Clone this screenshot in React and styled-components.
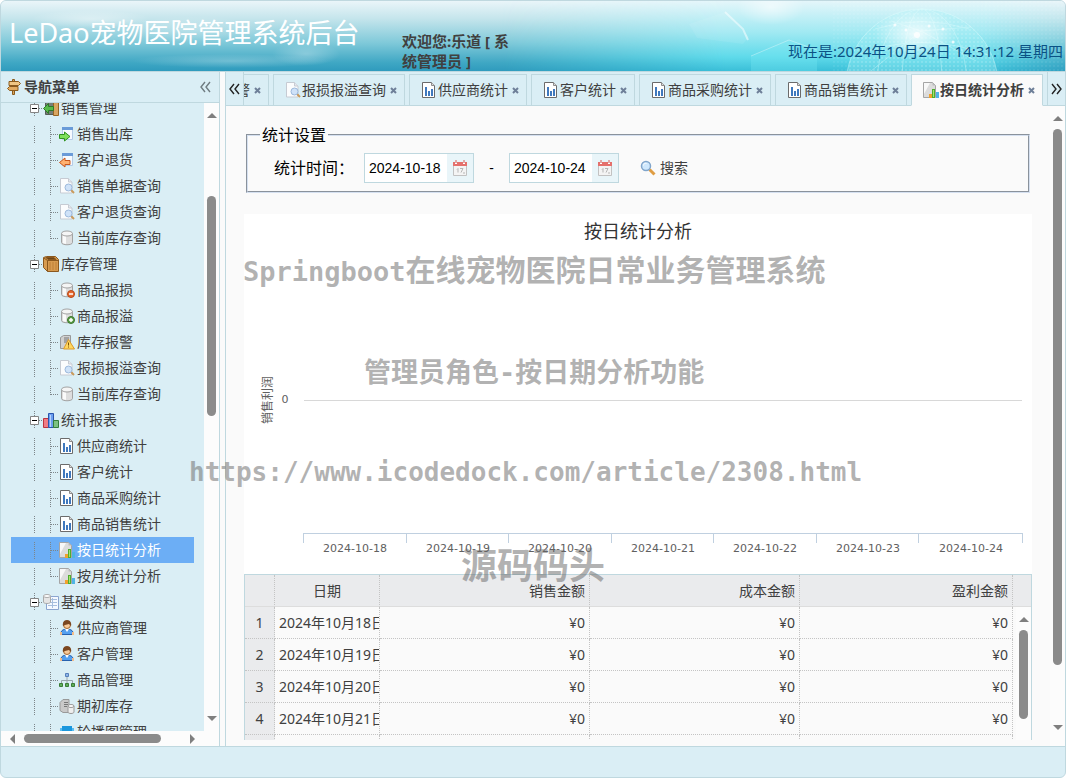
import React, { useEffect, useRef } from "react";
import styled, { createGlobalStyle } from "styled-components";

const GlobalStyle = createGlobalStyle`
  * {
    box-sizing: border-box;
  }

  body {
    margin: 0;
    background: #fff;
    color: #404040;
    font-family: "Noto Sans", "Noto Sans CJK SC", sans-serif;
    font-size: 14px;
    line-height: 20px;
  }

  button, input {
    font: inherit;
    color: inherit;
  }

  button {
    display: flex;
    align-items: center;
    justify-content: center;
    padding: 0;
    border: 0;
    background: none;
    cursor: pointer;
  }
`;

const Page = styled.div`
  position: relative;
  display: flex;
  flex-direction: column;
  height: 100vh;
  overflow: hidden;
  border: 1px solid #bfd8df;
  border-radius: 6px;
  background: #daeef5;
`;

const Header = styled.header`
  position: relative;
  flex: none;
  display: grid;
  grid-template-columns: 393px 116px 1fr;
  height: 70px;
  overflow: hidden;
  padding-left: 8px;
`;

const HeaderArt = styled.svg`
  position: absolute;
  inset: 0;
  width: 100%;
  height: 100%;
`;

const Title = styled.h1`
  position: relative;
  margin: 0;
  padding-top: 12px;
  color: #fff;
  font-size: 27px;
  font-weight: 400;
  line-height: 40px;
  white-space: nowrap;
`;

const Welcome = styled.div`
  position: relative;
  align-self: end;
  font-size: 15px;
  font-weight: bold;
`;

const Clock = styled.div`
  position: relative;
  align-self: end;
  padding: 0 2px 10px 0;
  color: #0b5285;
  font-size: 15px;
  text-align: right;
`;

const Body = styled.div`
  flex: 1;
  display: flex;
  min-height: 0;
  gap: 5px;
  background: #fafafa;
  border-top: 1px solid #bfd8df;
  border-bottom: 1px solid #bfd8df;
`;

const Footer = styled.footer`
  flex: none;
  height: 30px;
`;

const Sidebar = styled.aside`
  flex: none;
  display: flex;
  flex-direction: column;
  width: 219px;
  border-right: 1px solid #bfd8df;
  background: #fcfcfc;
`;

const SidebarHead = styled.div`
  flex: none;
  display: flex;
  align-items: center;
  gap: 2px;
  height: 31px;
  padding: 0 8px 0 5px;
  border-bottom: 1px solid #bfd8df;
  background: #daeef5;
`;

const SidebarTitle = styled.h2`
  flex: 1;
  margin: 0;
  font-size: 14px;
`;

const SidebarMain = styled.div`
  flex: 1;
  display: flex;
  min-height: 0;
`;

const TreePane = styled.nav`
  flex: 1;
  overflow: hidden;
  padding: 0 10px;
  background: #daeef5;
`;

const TreeList = styled.ul`
  margin: 0;
  padding: 0;
  list-style: none;
`;

const TreeLink = styled.a`
  display: flex;
  align-items: center;
  height: 26px;
  padding-left: 16px;
  color: ${(p) => (p.$active ? "#fff" : "#404040")};
  background: ${(p) => (p.$active ? "#6caef5" : "none")};
  text-decoration: none;
  white-space: nowrap;
`;

const TreeText = styled.span`
  padding-left: 2px;
`;

const Svg = styled.svg`
  flex: none;
  display: block;
`;

const ScrollBar = styled.div`
  flex: none;
  display: flex;
  flex-direction: ${(p) => (p.$row ? "row" : "column")};
  align-items: center;
  gap: ${(p) => (p.$row ? 0 : 2)}px;
  width: ${(p) => (p.$row ? "auto" : "15px")};
  height: ${(p) => (p.$row ? "15px" : "auto")};
  padding: ${(p) => p.$pad};
  background: #fcfcfc;
`;

const ScrollGap = styled.div`
  flex: ${(p) => p.$grow} 0 0;
`;

const ScrollThumb = styled.div`
  flex: ${(p) => p.$grow} 0 0;
  width: ${(p) => (p.$row ? "auto" : "9px")};
  height: ${(p) => (p.$row ? "9px" : "auto")};
  border-radius: 5px;
  background: #8b8b8b;
`;

const Main = styled.main`
  flex: 1;
  display: flex;
  flex-direction: column;
  min-width: 0;
  border-left: 1px solid #bfd8df;
`;

const TabBar = styled.div`
  flex: none;
  display: flex;
  height: 34px;
  background: #daeef5;
`;

const TabScroller = styled.button`
  flex: none;
  width: 18px;
  border: solid #bfd8df;
  border-width: ${(p) => (p.$right ? "0 0 1px 1px" : "0 1px 1px 0")};
`;

const TabStrip = styled.div`
  flex: 1;
  display: flex;
  justify-content: flex-end;
  align-items: flex-end;
  gap: 4px;
  min-width: 0;
  overflow: hidden;
  padding-right: 4px;
  box-shadow: inset 0 -1px #bfd8df;
`;

const Tab = styled.div`
  flex: none;
  display: flex;
  align-items: center;
  height: 32px;
  padding-left: 11px;
  border: 1px solid #bfd8df;
  border-bottom-color: ${(p) => (p.$active ? "#fafafa" : "#bfd8df")};
  background: ${(p) => (p.$active ? "#fafafa" : "#daeef5")};
  font-weight: ${(p) => (p.$active ? "bold" : "normal")};
`;

const TabLabel = styled.button`
  gap: 1px;
  font-weight: inherit;
  white-space: nowrap;
`;

const TabClose = styled.button`
  justify-content: flex-start;
  width: 18px;
  height: 16px;
  padding-left: 4px;
`;

const Content = styled.div`
  flex: 1;
  display: flex;
  min-height: 0;
`;

const Scrolled = styled.div`
  flex: 1;
  display: flex;
  flex-direction: column;
  min-width: 0;
  overflow: hidden;
  padding: 20px 18px 6px;
`;

const Filter = styled.fieldset`
  flex: none;
  display: flex;
  align-items: center;
  min-width: 0;
  height: 67px;
  margin: 0 2px 21px;
  padding: 9px 12px 0 26px;
  border: 2px groove #d5e0f0;
  color: #000;
`;

const Legend = styled.legend`
  margin-left: -14px;
  padding: 0 2px;
  font-size: 16px;
  line-height: 18px;
`;

const FieldLabel = styled.label`
  width: 90px;
  font-size: 16px;
`;

const DateBox = styled.div`
  display: flex;
  width: 110px;
  height: 30px;
  border: 1px solid #bfd8df;
  background: #fff;
`;

const DateInput = styled.input`
  flex: 1;
  min-width: 0;
  padding: 0 0 0 4px;
  border: 0;
  outline: 0;
  background: none;
  font-family: "Liberation Sans", sans-serif;
`;

const DateButton = styled.button`
  width: 26px;
  background: #e9f5f9;
`;

const Dash = styled.span`
  width: 35px;
  text-align: center;
`;

const SearchButton = styled.button`
  gap: 4px;
  margin-left: 21px;
  color: #404040;
`;

const Chart = styled.svg`
  flex: none;
  display: block;
  width: 100%;
  background: #fff;
`;

const ChartTitle = styled.text`
  fill: #333;
  font-size: 18px;
  text-anchor: middle;
`;

const AxisText = styled.text`
  fill: #606060;
  font-family: "DejaVu Sans", "Noto Sans CJK SC", sans-serif;
  font-size: ${(p) => p.$size || 11}px;
  text-anchor: middle;
`;

const Grid = styled.div`
  flex: 1;
  display: flex;
  flex-direction: column;
  min-height: 0;
  overflow: hidden;
  border: solid #bfd8df;
  border-width: 1px 1px 0;
`;

const GridBody = styled.div`
  flex: 1;
  display: flex;
  min-height: 0;
  overflow: hidden;
`;

const GridScroll = styled.div`
  flex: none;
  display: flex;
  width: 18px;
  overflow: hidden;
  padding-left: 3px;
`;

const Table = styled.table`
  flex: 1;
  width: 100%;
  min-width: 0;
  table-layout: fixed;
  border-collapse: separate;
  border-spacing: 0;
`;

const Th = styled.th`
  height: 32px;
  padding: 0 4px;
  border-right: ${(p) => (p.$last ? "0" : "1px dotted #c4c4c4")};
  border-bottom: 1px solid #ddd;
  background: #eaebed;
  font-weight: normal;
  text-align: ${(p) => p.$align || "right"};
`;

const Td = styled.td`
  height: 32px;
  padding: 0 4px;
  overflow: hidden;
  border: dotted #c4c4c4;
  border-width: 0 1px 1px 0;
  background: ${(p) => (p.$index ? "#eaebed" : "none")};
  text-align: ${(p) => p.$align || "right"};
  white-space: nowrap;
`;

const Watermark = styled.div`
  position: absolute;
  left: ${(p) => p.$x}px;
  top: ${(p) => p.$y}px;
  color: rgba(102, 102, 102, 0.5);
  font-family: "DejaVu Sans Mono", "Noto Sans CJK SC", monospace;
  font-size: ${(p) => p.$size}px;
  font-weight: bold;
  line-height: 40px;
  white-space: nowrap;
  pointer-events: none;
`;

const WatermarkLatin = styled.span`
  font-size: 27px;
`;

const drawings = {
  sign: (
    <g stroke="#8a5a1d" strokeWidth="1">
      <path d="M6.5 .5h2v15h-2z" fill="#d9a55b" />
      <path d="M3 2.500h9.500l2 2-2 2H3z" fill="#f0c683" />
      <path d="M12 7.500H3.500l-2 2 2 2H12z" fill="#e3ac62" />
    </g>
  ),
  find: (
    <g>
      <path d="M1.500 .5h8l3.500 3.500v11h-11.500z" fill="#fbfcfd" stroke="#c6cbd3" />
      <path d="M9.500 .5v3.500h3.500" fill="#e5e8ee" stroke="#c6cbd3" />
      <path d="M12 12l3 3" stroke="#c99a5b" strokeWidth="2" />
      <circle cx="9.500" cy="9.500" r="3.500" fill="#cfe2f8" stroke="#9db9dc" />
    </g>
  ),
  report: (
    <g>
      <path d="M1.500 .5h9l3 3v12h-12z" fill="#fff" stroke="#6b6b6b" />
      <path d="M10.500 .5v3h3" fill="#ddd" stroke="#8c8c8c" />
      <path d="M4 5h2v9H4zM7 9h2v5H7zM10 7h2v7h-2z" fill="#3f78bd" />
    </g>
  ),
  daily: (
    <g>
      <path d="M.5 .5h9l3 3v12H.5z" fill="#dcdcdc" stroke="#a5a5a5" />
      <path d="M1 1h6l-6 11z" fill="#f8f8f8" />
      <path d="M9.500 .5v3h3z" fill="#bbb" />
      <path d="M6 12h3v4H6z" fill="#f0a22e" />
      <path d="M9 7h3v9H9z" fill="#4fae2e" />
      <path d="M10 8h1v7h-1z" fill="#a7e36f" />
      <path d="M13 10h3v6h-3z" fill="#50b4e6" />
    </g>
  ),
  out: (
    <g>
      <path d="M3.500 1.500h10v12h-10z" fill="#f6faff" stroke="#b5cbe6" />
      <path d="M3 1h11v3H3z" fill="#6a9bd8" />
      <path d="M.5 8.500h5V6l5.500 4.500-5.500 4.500v-2.500h-5z" fill="#7ee05a" stroke="#2f9220" />
    </g>
  ),
  back: (
    <g>
      <path d="M3.500 1.500h10v12h-10z" fill="#f6faff" stroke="#b5cbe6" />
      <path d="M3 1h11v3H3z" fill="#6a9bd8" />
      <path d="M11 8.500H6V6L.5 10.500 6 15v-2.500h5z" fill="#ffb170" stroke="#c8571c" />
    </g>
  ),
  stock: (
    <g stroke="#a3a3a3">
      <path d="M2.500 3.500v9c0 3 11 3 11 0v-9z" fill="#dedede" />
      <path d="M4 5v8l3 1V5z" fill="#fafafa" stroke="none" />
      <ellipse cx="8" cy="3.500" rx="5.500" ry="2.500" fill="#f5f5f5" />
    </g>
  ),
  warn: (
    <g>
      <path d="M1.500 3.500l3-2h7v11l-2 2h-8z" fill="#d0d0d0" stroke="#999" />
      <path d="M5 4h5M5 6h5M5 8h4" stroke="#777" />
      <path d="M9.500 5.500l6 9.500h-11z" fill="#ffd75e" stroke="#d9982b" />
      <path d="M9.500 8.500v3M9.500 12.500v1" stroke="#7b4d00" />
    </g>
  ),
  door: (
    <g>
      <path d="M2.500 2.500h8v12h-8z" fill="#777e78" stroke="#565c58" />
      <path d="M10.500 1.500h5v14h-5z" fill="#d8a561" stroke="#956322" />
      <path d="M.5 8.500l5-5v3h5v4h-5v3z" fill="#57b94b" stroke="#2c7a27" />
    </g>
  ),
  box: (
    <g stroke="#8b581e">
      <path d="M.5 1.500l3-1h9l3 3v12h-11l-4-4z" fill="#d79b50" />
      <path d="M1 2l3.500 2.500h11M4.500 4.500v11" fill="none" />
      <path d="M3 1.500h8l2 2H5z" fill="#6f4517" />
      <path d="M7 6v8M10 6v8M13 6v8" stroke="#bd7f37" />
    </g>
  ),
  bars: (
    <g>
      <path d="M.5 6.500h5v9h-5z" fill="#f07c84" stroke="#ba3440" />
      <path d="M5.500 1.500h5v14h-5z" fill="#6c9ff0" stroke="#2a55ad" />
      <path d="M7 3h1v12H7z" fill="#b8d2fc" />
      <path d="M10.500 8.500h5v7h-5z" fill="#7cc282" stroke="#347e3b" />
    </g>
  ),
  data: (
    <g>
      <path d="M3.500 2.500h12v13h-12z" fill="#f5f9ff" stroke="#8ba5cf" />
      <path d="M5 5.500h9M5 8.500h9M5 11.500h9M9.500 4v10" stroke="#a6bede" />
      <path d="M.5 2v6c0 2 7 2 7 0V2z" fill="#e5e5e5" stroke="#aaa" />
      <ellipse cx="4" cy="2" rx="3.500" ry="1.500" fill="#fff" stroke="#aaa" />
    </g>
  ),
  user: (
    <g>
      <path d="M1.500 14.500c0-3 2-5 4-5h5c2 0 4 2 4 5z" fill="#55a0ef" stroke="#2761ae" />
      <path d="M1 12h2v3H1zM13 12h2v3h-2z" fill="#f2bd8b" />
      <path d="M6 9h4l-2 3z" fill="#fff" />
      <circle cx="8" cy="5" r="3.500" fill="#f7c998" stroke="#a8672c" />
      <path d="M4 6c-2-8 10-8 8 0l-2-2-4 1z" fill="#7b4720" />
    </g>
  ),
  sitemap: (
    <g>
      <path d="M8 5v3M2.500 11V8.500h11V11M8 8v3" fill="none" stroke="#9aa5ad" />
      <path d="M6.500 1.500h3v3h-3z" fill="#8db5e8" stroke="#5680bb" />
      <path d="M.5 11.500h3v3h-3zM6.500 11.500h3v3h-3zM12.500 11.500h3v3h-3z" fill="#5fae5a" stroke="#3b7c38" />
    </g>
  ),
  initial: (
    <g>
      <path d="M1 4.500l3-3h6v13H4l-3-2z" fill="#c9c9c9" stroke="#999" />
      <path d="M5 4.500h4M5 6.500h4M5 8.500h3" stroke="#777" />
      <path d="M9 8v6c0 2 6 2 6 0V8z" fill="#eee" stroke="#9a9a9a" />
      <ellipse cx="12" cy="8" rx="3" ry="1.500" fill="#fff" stroke="#9a9a9a" />
    </g>
  ),
  slides: (
    <g>
      <path d="M3 2h10v9H3z" fill="#1b97dd" />
      <path d="M1 4h2v7H1zM13 4h2v7h-2z" fill="#58bdf2" />
      <path d="M6 11h4v3H6z" fill="#1b79b5" />
    </g>
  ),
  calendar: (
    <g>
      <path d="M1.500 2.500h13v13h-13z" fill="#f4f4f4" stroke="#c2c2c2" />
      <path d="M1 2h14v4H1z" fill="#e5706c" />
      <path d="M4 0v4M12 0v4" stroke="#fff" strokeWidth="2" />
      <path d="M4 0v3M12 0v3" stroke="#c2504d" />
      <path d="M5 9.500l1-1v4M8 8.500h3l-2 4M11 13h2" fill="none" stroke="#b5b5b5" />
    </g>
  ),
  search: (
    <g>
      <path d="M9.500 9.500l5 5" stroke="#df9d43" strokeWidth="3" />
      <circle cx="6" cy="6" r="4.500" fill="#cfe8fd" stroke="#80a5cb" strokeWidth="1.500" />
      <path d="M3.500 5.500c0-2 2-2.500 3-2" fill="none" stroke="#fff" />
    </g>
  ),
};

drawings.loss = (
  <g>
    {drawings.stock}
    <circle cx="12" cy="12" r="3.500" fill="#e7692f" stroke="#b74817" />
    <path d="M10 12h4" stroke="#fff" strokeWidth="1.500" />
  </g>
);
drawings.gain = (
  <g>
    {drawings.stock}
    <circle cx="12" cy="12" r="3.500" fill="#5d9f4a" stroke="#3b762b" />
    <path d="M10 12h4M12 10v4" stroke="#fff" strokeWidth="1.500" />
  </g>
);

const Icon = ({ name }) => (
  <Svg width="16" height="16" viewBox="0 0 16 16" fill="none" aria-hidden="true">
    {drawings[name]}
  </Svg>
);

const branches = {
  line: "M7.500 1v17",
  join: "M7.500 1v17M8 9.500h8",
  end: "M7.500 1v9M8 9.500h8",
  toggle: "M7.500 0v5M7.500 14v4M12 9.500h4",
};

const Branch = ({ kind }) => (
  <Svg width="16" height="18" viewBox="0 0 16 18" fill="none" aria-hidden="true">
    <path d={branches[kind]} stroke="#7d8589" strokeDasharray="1 1" />
    {kind === "toggle" && (
      <g>
        <path d="M3.500 5.500h8v8h-8z" fill="#fff" stroke="#848484" />
        <path d="M5 9.500h5" stroke="#000" />
      </g>
    )}
  </Svg>
);

const Chevrons = ({ right, color = "#222" }) => (
  <Svg width="11" height="12" viewBox="0 0 11 12" fill="none" stroke={color} strokeWidth="1.400">
    <path d={right ? "M1 1l4 5-4 5M6 1l4 5-4 5" : "M5 1L1 6l4 5M10 1L6 6l4 5"} />
  </Svg>
);

const arrows = {
  up: "M0 7l5-5 5 5z",
  down: "M0 3l5 5 5-5z",
  left: "M7 0L2 5l5 5z",
  right: "M3 0l5 5-5 5z",
};

const Arrow = ({ to }) => (
  <Svg width="10" height="10" viewBox="0 0 10 10" aria-hidden="true">
    <path d={arrows[to]} fill="#7f7f7f" />
  </Svg>
);

const Scroll = ({ row, cut, pad, parts }) => (
  <ScrollBar $row={row} $pad={pad}>
    <Arrow to={row ? "left" : "up"} />
    <ScrollGap $grow={parts[0]} />
    <ScrollThumb $row={row} $grow={parts[1]} />
    <ScrollGap $grow={parts[2]} />
    {!cut && <Arrow to={row ? "right" : "down"} />}
  </ScrollBar>
);

const menu = [
  {
    text: "销售管理",
    icon: "door",
    children: [
      ["销售出库", "out"],
      ["客户退货", "back"],
      ["销售单据查询", "find"],
      ["客户退货查询", "find"],
      ["当前库存查询", "stock"],
    ],
  },
  {
    text: "库存管理",
    icon: "box",
    children: [
      ["商品报损", "loss"],
      ["商品报溢", "gain"],
      ["库存报警", "warn"],
      ["报损报溢查询", "find"],
      ["当前库存查询", "stock"],
    ],
  },
  {
    text: "统计报表",
    icon: "bars",
    children: [
      ["供应商统计", "report"],
      ["客户统计", "report"],
      ["商品采购统计", "report"],
      ["商品销售统计", "report"],
      ["按日统计分析", "daily"],
      ["按月统计分析", "daily"],
    ],
  },
  {
    text: "基础资料",
    icon: "data",
    children: [
      ["供应商管理", "user"],
      ["客户管理", "user"],
      ["商品管理", "sitemap"],
      ["期初库存", "initial"],
      ["轮播图管理", "slides"],
    ],
  },
];

const tabs = [
  ["库存报警", "warn"],
  ["报损报溢查询", "find"],
  ["供应商统计", "report"],
  ["客户统计", "report"],
  ["商品采购统计", "report"],
  ["商品销售统计", "report"],
  ["按日统计分析", "daily"],
];

const current = "按日统计分析";

const chartDays = ["18", "19", "20", "21", "22", "23", "24"];
const gridDays = ["18", "19", "20", "21", "22"];

function HeaderBackground() {
  return (
    <HeaderArt viewBox="0 0 1064 70" preserveAspectRatio="none" aria-hidden="true">
      <defs>
        <linearGradient id="sky" x1="0" y1="0" x2="0" y2="1">
          <stop offset="0" stopColor="#eaf5f9" />
          <stop offset="0.25" stopColor="#c5e5ec" />
          <stop offset="0.6" stopColor="#7fc9d9" />
          <stop offset="0.88" stopColor="#3fa7c4" />
          <stop offset="1" stopColor="#2f9bbd" />
        </linearGradient>
        <linearGradient id="aqua" x1="0" y1="0" x2="0" y2="1">
          <stop offset="0" stopColor="#e4f6fa" />
          <stop offset="0.45" stopColor="#a0e9f2" />
          <stop offset="0.8" stopColor="#5fdaea" />
          <stop offset="1" stopColor="#3abfd8" />
        </linearGradient>
        <linearGradient id="fade">
          <stop offset="0" stopColor="#fff" stopOpacity="0" />
          <stop offset="0.4" stopColor="#fff" />
          <stop offset="0.85" stopColor="#fff" />
          <stop offset="1" stopColor="#fff" stopOpacity="0.15" />
        </linearGradient>
        <mask id="aquaMask">
          <rect x="500" width="564" height="70" fill="url(#fade)" />
        </mask>
        <radialGradient id="glow">
          <stop offset="0" stopColor="#fff" stopOpacity="0.8" />
          <stop offset="1" stopColor="#fff" stopOpacity="0" />
        </radialGradient>
        <pattern id="dots" width="4" height="4" patternUnits="userSpaceOnUse">
          <circle cx="1" cy="1" r="0.700" fill="#fff" />
        </pattern>
      </defs>
      <rect width="1064" height="70" fill="url(#sky)" />
      <rect x="500" width="564" height="70" fill="url(#aqua)" mask="url(#aquaMask)" />
      <ellipse cx="90" cy="18" rx="60" ry="9" fill="url(#glow)" opacity="0.500" />
      <ellipse cx="190" cy="28" rx="70" ry="13" fill="url(#glow)" opacity="0.300" />
      <ellipse cx="230" cy="60" rx="100" ry="7" fill="url(#glow)" opacity="0.300" />
      <ellipse cx="305" cy="53" rx="34" ry="12" fill="url(#glow)" opacity="0.350" />
      <path d="M688 23l36-12 24 25-6 7-46-6z" fill="#fff" opacity="0.080" />
      <path d="M724 11l18 17 5 11" fill="none" stroke="#fff" strokeWidth="2" opacity="0.500" />
      <ellipse cx="770" cy="6" rx="34" ry="18" fill="url(#glow)" opacity="0.700" />
      <path d="M750 55l38-16 28 10v21h-66z" fill="#7cecf4" opacity="0.300" />
      <path d="M750 55l38-16 28 10" fill="none" stroke="#fff" opacity="0.350" />
      <rect x="830" width="234" height="70" fill="url(#dots)" opacity="0.180" />
      <circle cx="921" cy="84" r="76" fill="#a6f2f5" opacity="0.350" />
      <circle cx="921" cy="84" r="76" fill="url(#dots)" opacity="0.300" />
      <circle cx="921" cy="84" r="76" fill="none" stroke="#e3ffff" opacity="0.400" />
      <g fill="none" stroke="#e3ffff" opacity="0.350">
        <ellipse cx="921" cy="84" rx="45" ry="76" />
        <ellipse cx="921" cy="84" rx="20" ry="76" />
        <path d="M855 54q66-25 132 0M874 28q47-15 94 0M870 70l50-40 55 30M890 20l30 10 50-4" />
      </g>
      <ellipse cx="915" cy="33" rx="42" ry="26" fill="url(#glow)" />
      <g fill="#fff" opacity="0.800">
        <circle cx="894" cy="24" r="1.500" />
        <circle cx="905" cy="29" r="1.500" />
        <circle cx="916" cy="34" r="3" />
        <circle cx="928" cy="25" r="1.500" />
        <circle cx="942" cy="28" r="1.500" />
        <circle cx="952" cy="41" r="1.500" />
        <circle cx="967" cy="48" r="1.500" />
      </g>
    </HeaderArt>
  );
}

function Menu() {
  const pane = useRef(null);

  useEffect(() => {
    pane.current.scrollTop = 8;
  }, []);

  return (
    <Sidebar>
      <SidebarHead>
        <Icon name="sign" />
        <SidebarTitle>导航菜单</SidebarTitle>
        <button type="button" aria-label="collapse">
          <Chevrons color="#6f7b80" />
        </button>
      </SidebarHead>
      <SidebarMain>
        <TreePane ref={pane}>
          <TreeList>
            {menu.map((group) => (
              <li key={group.text}>
                <TreeLink href="#">
                  <Branch kind="toggle" />
                  <Icon name={group.icon} />
                  <TreeText>{group.text}</TreeText>
                </TreeLink>
                <TreeList>
                  {group.children.map(([text, icon], i) => (
                    <li key={text}>
                      <TreeLink href="#" $active={text === current}>
                        <Branch kind="line" />
                        <Branch
                          kind={
                            i === group.children.length - 1 && text !== "轮播图管理"
                              ? "end"
                              : "join"
                          }
                        />
                        <Icon name={icon} />
                        <TreeText>{text}</TreeText>
                      </TreeLink>
                    </li>
                  ))}
                </TreeList>
              </li>
            ))}
          </TreeList>
        </TreePane>
        <Scroll pad="8px 0" parts={[71, 220, 293]} />
      </SidebarMain>
      <Scroll row pad="0 22px 0 7px" parts={[6, 137, 26]} />
    </Sidebar>
  );
}

function Tabs() {
  return (
    <TabBar>
      <TabScroller type="button" aria-label="previous tabs">
        <Chevrons />
      </TabScroller>
      <TabStrip>
        {tabs.map(([text, icon]) => (
          <Tab key={text} $active={text === current}>
            <TabLabel type="button">
              <Icon name={icon} />
              {text}
            </TabLabel>
            <TabClose type="button" aria-label="close">
              <Svg width="7" height="7" viewBox="0 0 7 7">
                <path d="M1 1l5 5M6 1L1 6" stroke="#6e7f98" strokeWidth="2" />
              </Svg>
            </TabClose>
          </Tab>
        ))}
      </TabStrip>
      <TabScroller type="button" $right aria-label="next tabs">
        <Chevrons right />
      </TabScroller>
    </TabBar>
  );
}

function DateField({ id, value }) {
  return (
    <DateBox>
      <DateInput id={id} defaultValue={value} aria-label={id} />
      <DateButton type="button" aria-label="calendar">
        <Icon name="calendar" />
      </DateButton>
    </DateBox>
  );
}

function ProfitChart() {
  return (
    <Chart viewBox="0 0 788 360">
      <ChartTitle x="394" y="24">
        按日统计分析
      </ChartTitle>
      <AxisText $size={12} transform="translate(28 186) rotate(-90)">
        销售利润
      </AxisText>
      <AxisText x="41" y="189">
        0
      </AxisText>
      <path d="M60 186.500h718" stroke="#d8d8d8" />
      <path d="M59 319.500h720" stroke="#c0d0e0" />
      {[59, 162, 264, 367, 469, 572, 674, 778].map((x) => (
        <path key={x} d={`M${x}.5 319v10`} stroke="#c0d0e0" />
      ))}
      {chartDays.map((day, i) => (
        <AxisText key={day} x={111 + Math.round(i * 102.6)} y="338">
          2024-10-{day}
        </AxisText>
      ))}
    </Chart>
  );
}

function Columns({ filler }) {
  return (
    <colgroup>
      <col width="30" />
      <col width="105" />
      <col width="210" />
      <col width="210" />
      <col />
      {filler && <col width="18" />}
    </colgroup>
  );
}

function ProfitGrid() {
  return (
    <Grid>
      <div>
        <Table>
          <Columns filler />
          <thead>
            <tr>
              <Th />
              <Th $align="center">日期</Th>
              <Th>销售金额</Th>
              <Th>成本金额</Th>
              <Th>盈利金额</Th>
              <Th $last />
            </tr>
          </thead>
        </Table>
      </div>
      <GridBody>
        <Table>
          <Columns />
          <tbody>
            {gridDays.map((day, i) => (
              <tr key={day}>
                <Td $index $align="center">
                  {i + 1}
                </Td>
                <Td $align="left">2024年10月{day}日</Td>
                <Td>¥0</Td>
                <Td>¥0</Td>
                <Td>¥0</Td>
              </tr>
            ))}
          </tbody>
        </Table>
        <GridScroll>
          <Scroll cut pad="8px 0 0" parts={[1, 89, 19]} />
        </GridScroll>
      </GridBody>
    </Grid>
  );
}

export default function App() {
  return (
    <Page>
      <GlobalStyle />
      <Header>
        <HeaderBackground />
        <Title>LeDao宠物医院管理系统后台</Title>
        <Welcome>欢迎您:乐道 [ 系统管理员 ]</Welcome>
        <Clock>现在是:2024年10月24日 14:31:12 星期四</Clock>
      </Header>
      <Body>
        <Menu />
        <Main>
          <Tabs />
          <Content>
            <Scrolled>
              <Filter>
                <Legend>统计设置</Legend>
                <FieldLabel htmlFor="start">统计时间：</FieldLabel>
                <DateField id="start" value="2024-10-18" />
                <Dash>-</Dash>
                <DateField id="end" value="2024-10-24" />
                <SearchButton type="button">
                  <Icon name="search" />
                  搜索
                </SearchButton>
              </Filter>
              <ProfitChart />
              <ProfitGrid />
            </Scrolled>
            <Scroll pad="8px 0 14px" parts={[1, 536, 53]} />
          </Content>
        </Main>
      </Body>
      <Footer />
      <Watermark $x={242} $y={250} $size={30}>
        <WatermarkLatin>Springboot</WatermarkLatin>在线宠物医院日常业务管理系统
      </Watermark>
      <Watermark $x={363} $y={352} $size={27}>
        管理员角色-按日期分析功能
      </Watermark>
      <Watermark $x={188} $y={451} $size={26}>
        https://www.icodedock.com/article/2308.html
      </Watermark>
      <Watermark $x={460} $y={546} $size={36}>
        源码码头
      </Watermark>
    </Page>
  );
}
